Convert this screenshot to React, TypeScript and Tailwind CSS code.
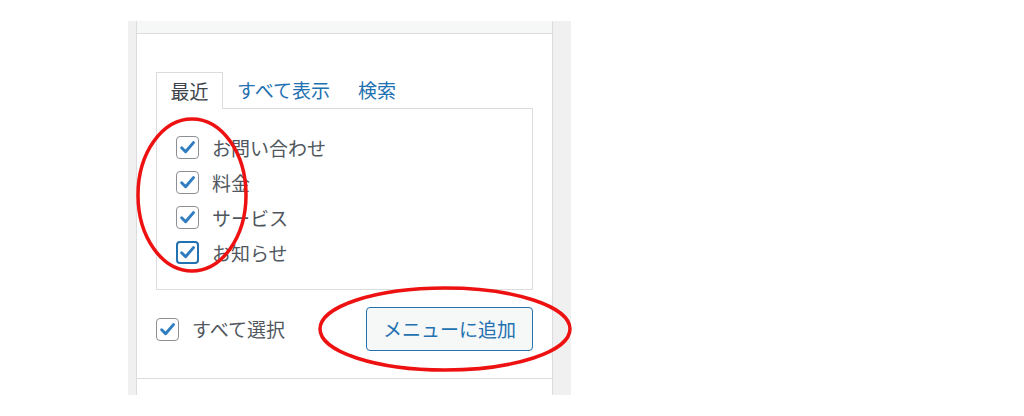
import React from 'react';

const items = ['お問い合わせ', '料金', 'サービス', 'お知らせ'];

function Check({ focused = false }: { focused?: boolean }) {
  return (
    <span
      className={`flex h-[23px] w-[23px] shrink-0 items-center justify-center rounded-[4px] bg-white ${
        focused ? 'border-2 border-[#2271b1]' : 'border border-[#8c8f94]'
      }`}
    >
      <svg width="17" height="17" viewBox="0 0 16 16" fill="none">
        <path d="M2.5 8.3 L6.2 12 L13.6 3.4" stroke="#2f7dc0" strokeWidth="2.8" strokeLinecap="round" strokeLinejoin="round" />
      </svg>
    </span>
  );
}

export default function App() {
  return (
    <div className="relative h-[416px] w-[1024px] overflow-hidden bg-white font-['Noto_Sans_CJK_JP',sans-serif] text-[19px]">
      <div className="ml-[128px] mt-[21px] flex h-[374px] w-[443px] bg-[#f0f0f1] pl-[8px] pr-[18px]">
        <div className="flex flex-1 flex-col border-x border-[#dcdcde] bg-white">
          {/* top strip */}
          <div className="h-[13px] border-b border-[#dcdcde] bg-[#f6f7f7]" />

          <div className="flex flex-col px-[19px] pt-[38px]">
            {/* tabs */}
            <div className="flex h-[36px] items-center">
              <div className="relative z-10 -mb-px flex h-[37px] w-[67px] items-center justify-center border border-b-0 border-[#dcdcde] bg-white text-[#3c434a]">
                最近
              </div>
              <span className="ml-[14px] text-[#2271b1]">すべて表示</span>
              <span className="ml-[28px] text-[#2271b1]">検索</span>
            </div>

            {/* list panel */}
            <div className="flex h-[182px] flex-col gap-[12px] border border-[#dcdcde] pl-[19px] pt-[27px]">
              {items.map((label, i) => (
                <label key={label} className="flex h-[23px] items-center gap-[13px] text-[#50575e]">
                  <Check focused={i === items.length - 1} />
                  <span className="leading-none">{label}</span>
                </label>
              ))}
            </div>

            {/* actions */}
            <div className="mt-[17px] flex items-center justify-between">
              <label className="flex items-center gap-[13px] text-[#50575e]">
                <Check />
                <span>すべて選択</span>
              </label>
              <button className="flex h-[44px] w-[167px] items-center justify-center rounded-[4px] border border-[#2271b1] bg-[#f6f7f7] text-[#2271b1]">
                メニューに追加
              </button>
            </div>
          </div>

          <div className="mt-[27px] border-t border-[#dcdcde]" />
        </div>
      </div>

      {/* red annotations */}
      <svg className="pointer-events-none absolute left-0 top-0" width="1024" height="416" viewBox="0 0 1024 416">
        <ellipse cx="192" cy="195" rx="54" ry="76" fill="none" stroke="#ee1111" strokeWidth="3.5" />
        <ellipse cx="445" cy="329" rx="125" ry="41" fill="none" stroke="#ee1111" strokeWidth="3.5" />
      </svg>
    </div>
  );
}
